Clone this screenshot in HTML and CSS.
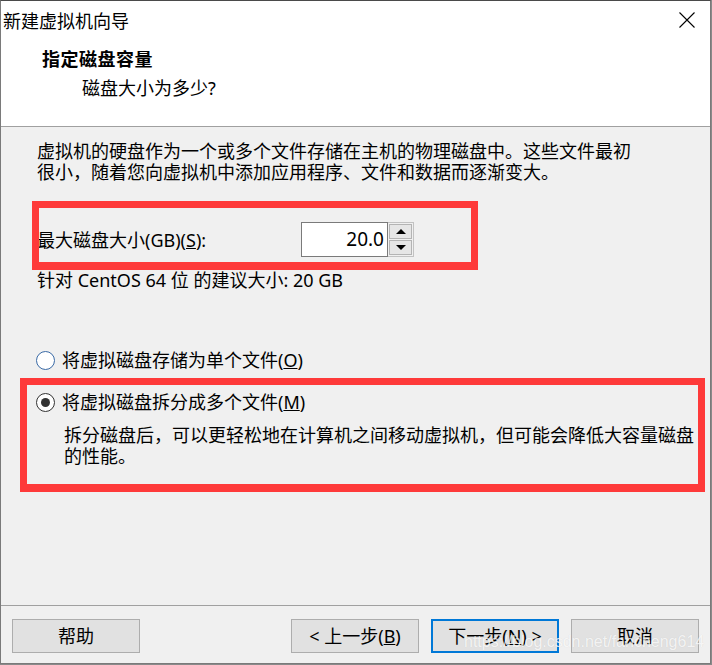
FILE: index.html
```html
<!DOCTYPE html>
<html lang="zh-CN">
<head>
<meta charset="utf-8">
<title>新建虚拟机向导</title>
<link rel="stylesheet" href="styles.css">
</head>
<body>
<div class="window">
  <div class="titlebar">
    <span class="title">新建虚拟机向导</span>
    <svg class="close" width="16" height="16" viewBox="0 0 16 16" aria-hidden="true">
      <path d="M0.5 0.5 L15.5 15.5 M15.5 0.5 L0.5 15.5" stroke="#000" stroke-width="1.1" fill="none"/>
    </svg>
  </div>
  <div class="header">
    <div class="h-title">指定磁盘容量</div>
    <div class="h-sub">磁盘大小为多少?</div>
  </div>
  <div class="content">
    <p class="desc">虚拟机的硬盘作为一个或多个文件存储在主机的物理磁盘中。这些文件最初<br>很小，随着您向虚拟机中添加应用程序、文件和数据而逐渐变大。</p>
    <div class="field-row">
      <span class="field-label">最大磁盘大小(GB)(<u>S</u>):</span>
      <div class="spin">
        <div class="spin-input">20.0</div>
        <div class="spin-btns">
          <div class="spin-btn"><span class="arrow-up"></span></div>
          <div class="spin-btn"><span class="arrow-down"></span></div>
        </div>
      </div>
      <div class="annot annot-size"></div>
    </div>
    <p class="hint">针对 CentOS 64 位 的建议大小: 20 GB</p>
    <div class="radio-row">
      <span class="radio radio-off"></span>
      <span class="radio-label">将虚拟磁盘存储为单个文件(<u>O</u>)</span>
    </div>
    <div class="split-group">
      <div class="radio-row">
        <span class="radio radio-on"></span>
        <span class="radio-label">将虚拟磁盘拆分成多个文件(<u>M</u>)</span>
      </div>
      <p class="radio-note">拆分磁盘后，可以更轻松地在计算机之间移动虚拟机，但可能会降低大容量磁盘<br>的性能。</p>
      <div class="annot annot-split"></div>
    </div>
  </div>
  <div class="footer">
    <button class="btn">帮助</button>
    <div class="nav">
      <button class="btn">&lt; 上一步(<u>B</u>)</button>
      <button class="btn btn-default">下一步(<u>N</u>) &gt;</button>
      <button class="btn">取消</button>
    </div>
    <span class="watermark">https://blog.csdn.net/fancheng614</span>
  </div>
</div>
</body>
</html>
```

FILE: styles.css
```css
html, body {
  margin: 0;
  padding: 0;
  background: #8a8a8a;
}

body {
  width: 712px;
  height: 665px;
  overflow: hidden;
  font-family: "Noto Sans", "Noto Sans CJK SC", sans-serif;
  color: #000;
}

.window {
  box-sizing: border-box;
  width: 711px;
  height: 664px;
  border: 1px solid #7a7a7a;
  border-top-color: #4a4a4a;
  background: #f0f0f0;
  display: flex;
  flex-direction: column;
}

.titlebar {
  height: 36px;
  flex: none;
  background: #fff;
  display: flex;
  align-items: center;
  justify-content: space-between;
  padding: 0 15px 0 2px;
}

.title {
  font-size: 18px;
  line-height: 22px;
  font-family: "Noto Sans CJK SC", sans-serif;
  margin-top: 1px;
}

.close {
  display: block;
  margin-top: 1px;
}

.header {
  flex: none;
  height: 78px;
  background: #fff;
  border-bottom: 1px solid #a0a0a0;
  padding: 11px 0 0 41px;
}

.h-title {
  font-size: 18px;
  line-height: 22px;
  font-weight: 700;
  letter-spacing: 0.5px;
}

.h-sub {
  font-size: 18px;
  line-height: 22px;
  margin: 7px 0 0 40px;
}

.content {
  flex: none;
  height: 478px;
  box-sizing: border-box;
  padding: 14px 0 0 36px;
  font-size: 18px;
}

.desc {
  margin: 0;
  line-height: 21px;
  white-space: nowrap;
}

.field-row {
  position: relative;
  display: flex;
  align-items: center;
  margin-top: 39px;
  height: 35px;
}

.field-label {
  width: 264px;
  line-height: 22px;
}

.spin {
  display: flex;
  height: 35px;
}

.spin-input {
  box-sizing: border-box;
  width: 87px;
  height: 35px;
  border: 1px solid #7a7a7a;
  background: #fff;
  text-align: right;
  padding-right: 3px;
  font-size: 19px;
  line-height: 32px;
}

.spin-btns {
  box-sizing: border-box;
  width: 26px;
  height: 35px;
  border: 1px solid #c2c2c2;
  border-left: none;
  display: flex;
  flex-direction: column;
  padding: 1px;
  gap: 1px;
  background: #f0f0f0;
}

.spin-btn {
  flex: 1;
  box-sizing: border-box;
  border: 1px solid #b4b4b4;
  background: #e6e6e6;
  display: flex;
  align-items: center;
  justify-content: center;
}

.arrow-up {
  width: 0;
  height: 0;
  border-left: 5px solid transparent;
  border-right: 5px solid transparent;
  border-bottom: 5px solid #000;
}

.arrow-down {
  width: 0;
  height: 0;
  border-left: 5px solid transparent;
  border-right: 5px solid transparent;
  border-top: 5px solid #000;
}

.hint {
  margin: 13px 0 0;
  line-height: 21px;
}

.radio-row {
  display: flex;
  align-items: center;
  height: 22px;
  margin-top: 58px;
}

.split-group {
  position: relative;
  margin-top: 20px;
}

.split-group .radio-row {
  margin-top: 0;
}

.radio {
  box-sizing: border-box;
  width: 19px;
  height: 19px;
  border-radius: 50%;
  background: #fff;
  margin-left: -1px;
  margin-right: 7px;
  display: flex;
  align-items: center;
  justify-content: center;
}

.radio-off {
  border: 1px solid #3a6aa6;
}

.radio-on {
  border: 1px solid #333;
}

.radio-on::after {
  content: "";
  width: 9px;
  height: 9px;
  border-radius: 50%;
  background: #333;
}

.radio-label {
  line-height: 22px;
}

.radio-note {
  margin: 12px 0 0 27px;
  line-height: 21px;
  white-space: nowrap;
}

.annot {
  position: absolute;
  box-sizing: border-box;
  border: 7px solid #fe3a3a;
  pointer-events: none;
}

.annot-size {
  top: -21px;
  left: -5px;
  width: 446px;
  height: 69px;
  border-bottom-width: 8px;
}

.annot-split {
  top: -13px;
  left: -17px;
  width: 685px;
  height: 114px;
  border-bottom-width: 8px;
}

.footer {
  position: relative;
  flex: 1;
  border-top: 1px solid #a0a0a0;
  display: flex;
  justify-content: space-between;
  align-items: flex-start;
  padding: 13px 11px 0 11px;
}

.nav {
  display: flex;
  gap: 12px;
}

.btn {
  box-sizing: border-box;
  width: 128px;
  height: 34px;
  margin: 0;
  padding: 0;
  border: 1px solid #adadad;
  background: #e1e1e1;
  font-family: "Noto Sans", "Noto Sans CJK SC", sans-serif;
  font-size: 18px;
  line-height: 22px;
  color: #000;
}

.btn-default {
  border: 2px solid #0078d7;
}

.watermark {
  position: absolute;
  left: 463px;
  top: 26px;
  font-family: "Liberation Sans", Arial, sans-serif;
  font-size: 16px;
  line-height: 20px;
  color: rgba(255, 255, 255, 0.8);
  text-shadow: 0 0 1px rgba(0, 0, 0, 0.12);
  white-space: nowrap;
  pointer-events: none;
}
```
